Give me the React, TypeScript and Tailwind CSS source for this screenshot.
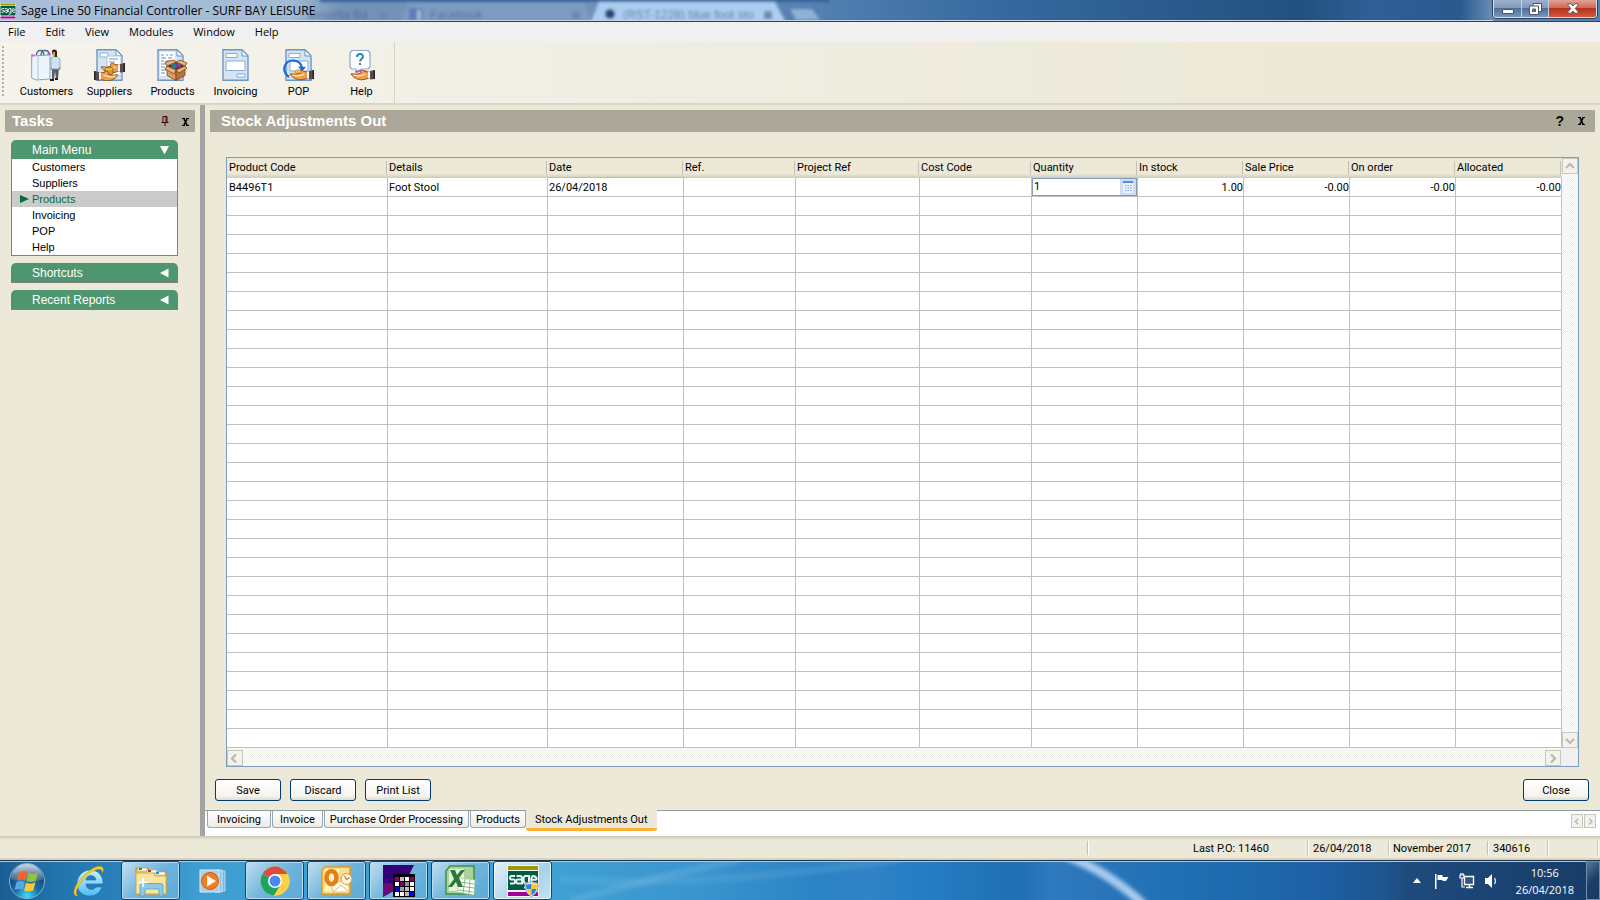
import React from "react";

const UI = "font-['Liberation_Sans',Arial,sans-serif]";
const SMALL = "font-[Roboto,'Liberation_Sans',sans-serif]";

/* ---------- document shape shared by the toolbar icons ---------- */
function Sheet() {
  return (
    <>
      <path d="M3 .7h19l6 6V31.300H3z" fill="#d3e4f3" stroke="#6d97c3" strokeWidth="1.400" />
      <path d="M22 1v6h6z" fill="#f4f9fd" stroke="#6d97c3" />
    </>
  );
}

/* Open palm; fingers point left unless flipped. */
function Hand({ x, y, flip = false }: { x: number; y: number; flip?: boolean }) {
  return (
    <g transform={`translate(${x} ${y})${flip ? " scale(-1 1)" : ""}`}>
      <path d="M0 4c2-1 5 1 7 0l3-1c-2-3 2-3.500 4-1.500l5 .5v6l-6 1.500c-5 1-10-1-13-5.500z" fill="#eda04c" stroke="#8f4a1b" strokeWidth=".9" />
      <path d="M2.500 5c4 1.500 8 1 12-1" fill="none" stroke="#ffe6b8" strokeWidth="1.300" />
      <path d="M17 1.500h2.500v7h-2.500z" fill="#f6f6f6" />
      <path d="M19 1l5-1v9l-5 .5z" fill="#5a4a4c" />
      <path d="M22.500 0h1.500v9h-1.500z" fill="#2c2226" />
    </g>
  );
}

function CustomersIcon() {
  return (
    <svg width="32" height="32" viewBox="0 0 32 32" aria-hidden="true">
      <path d="M5.500 6c0-6 7-6 7.500 0M10 6c0-6 8-6 8.500 0" fill="none" stroke="#3f6a92" strokeWidth="1.400" />
      <path d="M.7 7L19 6v24l-14 1-4.300-2z" fill="#eef4fb" stroke="#7fa4cb" />
      <path d="M7 7v23.500" stroke="#a9c5e2" />
      <path d="M0 6h4M1 6v2M16 5h4" stroke="#e040d0" />
      <path d="M21 18h7l-1 12h-2l-1-8-1 9h-2z" fill="#555b62" />
      <path d="M20 9l3-1.500h3L29 10v10h-9z" fill="#cfe2f4" stroke="#7ba0c7" strokeWidth=".8" />
      <path d="M21 2c1-2 5-2 5 1v5h-2l-1-2-2-1z" fill="#3a2414" />
      <path d="M21.500 3h2.500v4h-2z" fill="#d99a5c" />
      <path d="M19 30h4v2h-4zM24 29h3v2h-3z" fill="#2b1b12" />
      <path d="M28.500 18v3M20.500 19v2" stroke="#c98548" strokeWidth="1.500" />
    </svg>
  );
}

function SuppliersIcon() {
  return (
    <svg width="32" height="32" viewBox="0 0 32 32" aria-hidden="true">
      <Sheet />
      <path d="M6 4h8v4H6z" fill="#fff" stroke="#8bb0d6" />
      <path d="M13 7h14v20H13z" fill="#fff" stroke="#a9c5e2" />
      <path d="M15 10h9M15 13h6" stroke="#6f98c6" />
      <Hand x={7} y={14} />
      <path d="M11 19l5-1.500 3 1.500v6l-5 1.500-3-1.500z" fill="#d69a2b" stroke="#8a5a12" strokeWidth=".8" />
      <path d="M11.500 19.500l3 1.500 4-1.500" fill="none" stroke="#f7d888" />
      <Hand x={24} y={22} flip />
    </svg>
  );
}

function ProductsIcon() {
  return (
    <svg width="32" height="32" viewBox="0 0 32 32" aria-hidden="true">
      <path d="M1 .7h19l6 6V31.300H1z" fill="#d3e4f3" stroke="#6d97c3" strokeWidth="1.400" />
      <path d="M20 1v6h6z" fill="#f4f9fd" stroke="#6d97c3" />
      <path d="M3 3h15v24H3z" fill="#fff" />
      <path d="M4 6h3M9 6h2M13 6h3M4 9h5M11 9h4M4 12h3M9 12h5M4 15h5M4 18h4M4 21h5M4 24h4" stroke="#5a8fc6" strokeWidth="1.200" />
      <path d="M10 17l9 4v10.500l-9-5z" fill="#dc9c62" stroke="#7c4417" strokeWidth=".8" />
      <path d="M19 21l9-4v9.500l-9 5z" fill="#b8713a" stroke="#7c4417" strokeWidth=".8" />
      <path d="M10 17l9-4 9 4-9 4z" fill="#5a2e14" />
      <circle cx="17" cy="17" r="3" fill="#1f7f86" />
      <circle cx="21.500" cy="16" r="2.800" fill="#7b3c9b" />
      <path d="M10 17l-2-4 9-2 2 2zM28 17l2-3-7-3-4 2zM10 17l-2 3 9 5 2-4zM28 17l2 2-8 5-3-3z" fill="#e9b47c" stroke="#7c4417" strokeWidth=".8" />
    </svg>
  );
}

function InvoicingIcon() {
  return (
    <svg width="32" height="32" viewBox="0 0 32 32" aria-hidden="true">
      <Sheet />
      <path d="M6 4.500h11v4H6zM6 12h19v9.500H6zM17 25h8v3h-8z" fill="#fff" stroke="#86add5" />
    </svg>
  );
}

function PopIcon() {
  return (
    <svg width="32" height="32" viewBox="0 0 32 32" aria-hidden="true">
      <Sheet />
      <path d="M6 4.500h11v4H6zM7 12h18v10H7z" fill="#fff" stroke="#86add5" />
      <path d="M6 28C-2 22 1 11.500 10 11.500c5.500 0 8 3 9 7" fill="none" stroke="#1767e6" strokeWidth="2.200" />
      <path d="M15 17.500l8 .5-4 4.500z" fill="#1767e6" />
      <Hand x={7} y={21} />
      <path d="M12 22l3-1.500 3 1.500v2h-6z" fill="#f3c64c" stroke="#b07a1a" strokeWidth=".6" />
    </svg>
  );
}

function HelpIcon() {
  return (
    <svg width="32" height="32" viewBox="0 0 32 32" aria-hidden="true">
      <path d="M6 1.500h16l2 2V18l-2 2h-7l-4 4-1-4H6l-2-2V3.500z" fill="#fdfeff" stroke="#86a9cc" strokeWidth="1.200" />
      <path d="M11 8c0-4 6-4 6-.5 0 2.500-3 2.500-3 5" fill="none" stroke="#2e86b8" strokeWidth="2" />
      <path d="M13 14h2v2h-2z" fill="#2e86b8" />
      <path d="M9 23l3-1h8" fill="none" stroke="#e040d0" strokeWidth="1.500" />
      <Hand x={5} y={21} />
    </svg>
  );
}

/* ---------- taskbar icons ---------- */
function SageLogo({ size }: { size: number }) {
  return (
    <svg width={size} height={size} viewBox="0 0 32 32" aria-hidden="true">
      <path d="M0 0h32v32H0z" fill="#f4f6f4" />
      <path d="M1 1h30v4H1z" fill="#9c9a00" />
      <path d="M1 6h30v19H1z" fill="#005a46" />
      <path d="M1 27h30v4H1z" fill="#a1009f" />
      <g fill="none" stroke="#e8f3ef" strokeWidth="2">
        <path d="M8 11H4.500c-2 0-2 3.500 0 3.500h2c2 0 2 4 0 4H3" />
        <path d="M9.500 11H13c1.500 0 2 1 2 2v5.500h-4c-2.500 0-2.500-4 0-4h4" />
        <path d="M22 18.500h-3.500c-2.500 0-2.500-7.500 0-7.500H22v9c0 2-1 2.500-5 2.500" />
        <path d="M30 18.500h-3.500c-3 0-3-7.500 0-7.500 3.500 0 3.500 3.700 2.500 3.700h-4" />
      </g>
    </svg>
  );
}

function StartOrb() {
  return (
    <svg width="38" height="38" viewBox="0 0 38 38" aria-hidden="true">
      <defs>
        <radialGradient id="orb" cx=".5" cy=".92" r=".85">
          <stop offset="0" stopColor="#39e0fb" />
          <stop offset=".4" stopColor="#1a6fa5" />
          <stop offset=".8" stopColor="#174a78" />
          <stop offset="1" stopColor="#3e6c94" />
        </radialGradient>
        <linearGradient id="orbGloss" x1="0" y1="0" x2="0" y2="1">
          <stop offset="0" stopColor="#fff" stopOpacity=".7" />
          <stop offset="1" stopColor="#fff" stopOpacity=".1" />
        </linearGradient>
      </defs>
      <circle cx="19" cy="19" r="17.500" fill="url(#orb)" stroke="#86b4d4" />
      <path d="M3 17a16 15 0 0 1 32 0c-8 4-22 4-32 0z" fill="url(#orbGloss)" />
      <path d="M11 10.500c3-2 6-1.500 8.500 0l-2 8c-3-1.500-5.500-1.500-8.500 0z" fill="#f0652a" />
      <path d="M20.500 11c3 1.500 6 1.500 9.500-.5l-2 8c-3 2-6.500 1.500-9.500.5z" fill="#8cc63f" />
      <path d="M8.500 20c3-1.500 5.500-1.500 8.500 0l-2 8c-3-1.500-5.500-1.500-8.500 0z" fill="#54a8e8" />
      <path d="M18 20.500c3 1.500 6.500 1.500 9.500-.5l-2 8c-3 2-6.500 1.500-9.500.5z" fill="#fcc732" />
    </svg>
  );
}

function ExplorerE() {
  return (
    <svg width="32" height="32" viewBox="0 0 32 32" aria-hidden="true">
      <defs>
        <linearGradient id="ie" x1="0" y1="0" x2="0" y2="1">
          <stop offset="0" stopColor="#c8f2ff" />
          <stop offset="1" stopColor="#4ebdf3" />
        </linearGradient>
      </defs>
      <path d="M30 19H13c0 6 8 7 10 3h6c-2 6-7 9-12 9C9 31 4 26 4 18.500S10 5 17.500 5C26 5 30.500 12 30 19zM13 15h10c-.5-6-9.500-6-10 0z" fill="url(#ie)" stroke="#2477b0" strokeWidth=".7" />
      <path d="M5 31c-6 1-5-8 1-15C13 7 24-1 29 2c2 1 1.500 4 .5 6 0-8-12-2-19 6-7 8-9 15-5.500 17z" fill="#f9cc22" stroke="#c58e08" strokeWidth=".4" />
    </svg>
  );
}

function FolderIcon() {
  return (
    <svg width="34" height="32" viewBox="0 0 34 32" aria-hidden="true">
      <path d="M2 3h12v4h18v22H2z" fill="#e7c867" stroke="#b89336" />
      <path d="M4 3h9v3H4zM13 5h10v3H13zM21 7h10v3H21z" fill="#fff" stroke="#c9a94f" strokeWidth=".6" />
      <path d="M5 3h3v2H5z" fill="#20a020" />
      <path d="M14 5h3v2h-3z" fill="#d02e1c" />
      <path d="M22 7h3v2h-3z" fill="#2c8be0" />
      <path d="M2 8h17l2 3h11v18H2z" fill="#f7e6a1" stroke="#cfae55" />
      <path d="M6 30V21c0-2 1-2.500 3-2.500h17c2 0 3 .5 3 2.500v10h-4v-7H11v7H6z" fill="#8fc9e8" stroke="#5a9cc8" strokeWidth=".8" />
      <path d="M9 13v9M4.500 17.500h9" stroke="#fff" strokeWidth="1.500" />
    </svg>
  );
}

function MediaIcon() {
  return (
    <svg width="28" height="26" viewBox="0 0 28 26" aria-hidden="true">
      <path d="M19 3h7v20h-7z" fill="#7db8dd" stroke="#b6dcf2" />
      <path d="M16 2h7v22h-7z" fill="#8fc4e4" stroke="#c9e7f7" />
      <path d="M1 2h19v22H1z" fill="#a6cfe8" stroke="#d6edf9" />
      <circle cx="11" cy="13" r="8.500" fill="#f57c1f" stroke="#d65b0c" />
      <path d="M8 7.500l9 5.500-9 5.500z" fill="#fff" />
    </svg>
  );
}

function ChromeIcon() {
  return (
    <svg width="30" height="30" viewBox="0 0 30 30" aria-hidden="true">
      <circle cx="15" cy="15" r="14.500" fill="#fdd24a" />
      <path d="M15 15L2.500 7.700A14.500 14.500 0 0 1 27.600 8H15z" fill="#dd4b3e" />
      <path d="M2.500 7.700A14.500 14.500 0 0 0 14 29.500l7-11-6-3.500z" fill="#1da462" />
      <path d="M15 8h12.600a14.500 14.500 0 0 1-13.600 21.500l7-11z" fill="#fdd24a" />
      <circle cx="15" cy="15" r="7" fill="#fff" />
      <circle cx="15" cy="15" r="5.500" fill="#4a8af4" />
    </svg>
  );
}

function OutlookIcon() {
  return (
    <svg width="32" height="32" viewBox="0 0 32 32" aria-hidden="true">
      <path d="M4 2h25v27H1V5z" fill="#fde08a" stroke="#e59b1a" strokeWidth="1.500" />
      <path d="M4 4h14v22H4z" fill="#fff2c4" />
      <path d="M10 19l10-3 8 5v6H12z" fill="#fffdf6" stroke="#e7b450" strokeWidth=".8" />
      <path d="M12 27l8-7 7 6" fill="none" stroke="#e7b450" />
      <ellipse cx="10.500" cy="12.500" rx="5" ry="6.500" fill="none" stroke="#e67e12" strokeWidth="4.500" />
      <circle cx="25.500" cy="14" r="5.500" fill="#fdf3dc" stroke="#e0982b" />
      <path d="M23.500 11l2 3.500 3-2" fill="none" stroke="#c9761a" strokeWidth="1.200" />
    </svg>
  );
}

function GridAppIcon() {
  const cells: [number, number, string][] = [
    [0, 0, "#8a007c"], [1, 0, "#c0c0c0"], [2, 0, "#fff"], [3, 0, "#8a007c"],
    [0, 1, "#fff"], [1, 1, "#7a0070"], [2, 1, "#909090"], [3, 1, "#fff"],
    [0, 2, "#0000f0"], [1, 2, "#a0a0a0"], [2, 2, "#c0c0c0"], [3, 2, "#fff"],
    [0, 3, "#fff"], [1, 3, "#fff"], [2, 3, "#c0c0c0"], [3, 3, "#0000f0"],
  ];
  return (
    <svg width="32" height="32" viewBox="0 0 32 32" aria-hidden="true">
      <path d="M0 0h31l-5 10H14v14L0 32z" fill="#33007a" />
      <path d="M0 18h10v8L0 32z" fill="#6c0a78" />
      <path d="M10 9h22v23H10z" fill="#000" />
      {cells.map(([c, r, f]) => (
        <rect key={`${c}-${r}`} x={12 + c * 5} y={12 + r * 5} width="4" height="4" fill={f} />
      ))}
    </svg>
  );
}

function ExcelIcon() {
  return (
    <svg width="32" height="32" viewBox="0 0 32 32" aria-hidden="true">
      <path d="M5 1h24v28H1V6z" fill="#a9d39a" stroke="#3f9142" strokeWidth="1.500" />
      <path d="M4 4h15v22H4z" fill="#e3f2dc" />
      <path d="M15 13l15 2-1 15-17-3z" fill="#fff" stroke="#9fc79a" strokeWidth=".7" />
      <path d="M15 17l14 2M14 21l15 2M13 25l15 2M20 14l-2 14M25 15l-1 14" stroke="#77b377" strokeWidth=".9" />
      <path d="M5 5h5l2 5 4-5h4l-6 8 4 9h-5l-2-5-4 5H3l6-8z" fill="#2c7a34" />
    </svg>
  );
}

function SageShieldIcon() {
  return (
    <span className="relative block size-8">
      <SageLogo size={32} />
      <svg className="absolute right-0 bottom-0" width="15" height="16" viewBox="0 0 15 16" aria-hidden="true">
        <path d="M7.500.5C10 2 12 2 14 2.500c0 6-1 10-6.500 13C2 12.500 1 8.500 1 2.500 3 2 5 2 7.500.5z" fill="#f0f2f5" stroke="#8d99a6" />
        <path d="M7.500 2.200V8H2.600C2.200 6.500 2 5 2 3.700c2-.2 3.500-.5 5.500-1.500z" fill="#2f7fd6" />
        <path d="M7.500 2.200V8h4.900c.4-1.500.6-3 .6-4.300-2-.2-3.500-.5-5.500-1.500z" fill="#f7c92c" />
        <path d="M7.500 8v6.200C4.600 12.600 3.200 10.500 2.600 8z" fill="#f7c92c" />
        <path d="M7.500 8v6.200c2.900-1.600 4.300-3.700 4.900-6.200z" fill="#2f7fd6" />
      </svg>
    </span>
  );
}

/* ---------- title bar ---------- */
function TitleBar() {
  return (
    <header className="relative flex h-[22px] items-start overflow-hidden border-b border-[#2f3f5c] bg-[linear-gradient(90deg,#a9bfd8_0px,#a3bad5_290px,#7292b8_340px,#7394ba_560px,#5582b3_800px,#36699f_1000px,#22507f_1300px,#2e5f96_1370px,#2a598e_1460px,#6489b3_1490px,#5580ae_100%)]">
      <svg className="absolute inset-0" width="830" height="21" viewBox="0 0 830 21" aria-hidden="true">
        <defs>
          <filter id="soft" x="-20%" y="-50%" width="140%" height="200%"><feGaussianBlur stdDeviation="1.800" /></filter>
        </defs>
        <g filter="url(#soft)">
          <path d="M320-3h510v5H320z" fill="#376499" />
          <path d="M400 24l8-21h176l8 21z" fill="#7c9dc1" />
          <path d="M590 24l9-22h176l12 22z" fill="#aacdf0" />
          <path d="M790 9h22l8 11h-24z" fill="#8fb1d4" />
          <path d="M409 8h14v12h-14z" fill="#5f7ab8" />
          <path d="M417 10h4v10h-4z" fill="#a6b8dc" />
          <circle cx="610" cy="14" r="5" fill="#2a4574" />
          <path d="M379 11h8v8h-8zM572 11h8v8h-8zM764 11h8v8h-8z" fill="#6c89ae" />
          <g className={`${UI} text-[12px]`} fill="#4a658c" fillOpacity=".8">
            <text x="308" y="19">assuma Ba</text>
            <text x="430" y="19">Facebook</text>
            <text x="623" y="19">(RST-1228) blue foot sto</text>
          </g>
        </g>
      </svg>
      <div className="relative flex h-[21px] flex-1 items-center border-b border-[#c4d4e6] pt-px">
        <SageLogo size={16} />
        <h1 className="ml-[5px] font-['Open_Sans','Noto_Sans',sans-serif] text-[12px] leading-4 text-black">
          Sage Line 50 Financial Controller - SURF BAY LEISURE
        </h1>
      </div>
      <div className="relative mr-[3px] flex h-[18px] overflow-hidden rounded-b-[4px] border border-t-0 border-[#d5e0ec] shadow-[0_0_0_1px_#2c3e58]">
        <button aria-label="Minimise" className="flex w-7 items-center justify-center border-r border-[#c3d0e0] bg-[linear-gradient(#9db1cc,#7d97b9_50%,#4f6f9a_50%,#7996ba)]">
          <svg width="12" height="10" viewBox="0 0 12 10" aria-hidden="true"><path d="M.5 5.500h11v4H.5z" fill="#fff" stroke="#49566b" /></svg>
        </button>
        <button aria-label="Restore" className="flex w-[27px] items-center justify-center border-r border-[#c3d0e0] bg-[linear-gradient(#9db1cc,#7d97b9_50%,#4f6f9a_50%,#7996ba)]">
          <svg width="13" height="12" viewBox="0 0 13 12" aria-hidden="true">
            <path d="M4 .5h8.500v8H4z" fill="#fff" stroke="#49566b" />
            <path d="M.5 3h9v8.500h-9z" fill="#fff" stroke="#49566b" />
            <path d="M3.500 6h3v2.500h-3z" fill="#6783a8" stroke="#49566b" />
          </svg>
        </button>
        <button aria-label="Close window" className="flex w-[47px] items-center justify-center bg-[linear-gradient(#dfa396,#cf6a55_45%,#b8321b_50%,#d0583c)]">
          <svg width="12" height="11" viewBox="0 0 12 11" aria-hidden="true">
            <path d="M1 .8h3.200L6 3 7.800.8H11v1.400L8.200 5.500 11 8.700v1.500H7.800L6 8l-1.800 2.200H1V8.700l2.800-3.200L1 2.200z" fill="#fff" stroke="#5a4750" strokeWidth=".9" />
          </svg>
        </button>
      </div>
    </header>
  );
}

const menus = ["File", "Edit", "View", "Modules", "Window", "Help"];

function MenuBar() {
  return (
    <nav aria-label="Menu" className="flex h-5 items-center gap-5 bg-[#f0f0f0] pl-2 font-['Open_Sans','Noto_Sans',sans-serif] text-[11px] leading-5 text-black">
      {menus.map((m) => (
        <button key={m}>{m}</button>
      ))}
    </nav>
  );
}

const tools = [
  { label: "Customers", icon: <CustomersIcon /> },
  { label: "Suppliers", icon: <SuppliersIcon /> },
  { label: "Products", icon: <ProductsIcon /> },
  { label: "Invoicing", icon: <InvoicingIcon /> },
  { label: "POP", icon: <PopIcon /> },
  { label: "Help", icon: <HelpIcon /> },
];

function ToolBar() {
  return (
    <div role="toolbar" className="flex h-[63px] border-b-2 border-[#d8d5c4] bg-[linear-gradient(90deg,#f5f3ec,#f0eee3_40%,#ece9d8_80%)]">
      <div className="mt-1 ml-[2px] h-[50px] w-[2px] bg-[repeating-linear-gradient(#b5b2a4_0_2px,transparent_2px_4px)]" />
      <div className="flex border-r border-[#d8d5c4] pr-px pl-[11px]">
        {tools.map((t) => (
          <button key={t.label} className={`flex w-[63px] flex-col items-center pt-[7px] text-[11px] leading-[22px] text-black ${SMALL}`}>
            {t.icon}
            {t.label}
          </button>
        ))}
      </div>
    </div>
  );
}

/* ---------- task pane ---------- */
const taskItems = ["Customers", "Suppliers", "Products", "Invoicing", "POP", "Help"];

function CrossIcon() {
  return (
    <svg width="7" height="8" viewBox="0 0 7 8" aria-hidden="true">
      <path d="M1.500 0l4 8M5.500 0l-4 8" stroke="#000" strokeWidth="1.600" />
      <path d="M0 .5h3M4 .5h3M0 7.500h3M4 7.500h3" stroke="#000" />
    </svg>
  );
}

function GroupHeader({ title, open = false }: { title: string; open?: boolean }) {
  return (
    <button
      aria-expanded={open}
      className={`flex w-full items-center justify-between rounded-t-[5px] bg-[#4d9670] pr-[9px] pl-[21px] text-[12px] text-white ${open ? "h-[19px]" : "h-5 border-b border-[#808080]"}`}
    >
      {title}
      <svg width="9" height="10" viewBox="0 0 9 10" aria-hidden="true">
        <path d={open ? "M0 1h9L4.500 9.500z" : "M8.500 .5v9L0 5z"} fill="#fff" />
      </svg>
    </button>
  );
}

function TaskPane() {
  return (
    <aside className="w-[200px] shrink-0 pt-[5px] pr-[5px] pl-[5px]">
      <div className="flex h-[22px] items-center bg-[#aca899] pr-[6px] pl-[7px]">
        <h2 className="flex-1 text-[15px] font-bold text-white">Tasks</h2>
        <button aria-label="Pin" className="mr-[13px]">
          <svg width="8" height="10" viewBox="0 0 8 10" aria-hidden="true">
            <path d="M2 6V.5h4V6M5 1v5M.5 6.500h7M4 7v3" fill="none" stroke="#4a0000" />
          </svg>
        </button>
        <button aria-label="Close tasks" className="pt-[2px]"><CrossIcon /></button>
      </div>
      <div className="mt-2 mr-[17px] ml-[6px] flex flex-col gap-[7px]">
        <section>
          <GroupHeader title="Main Menu" open />
          <ul className="border border-t-0 border-[#808080] bg-white text-[11px] leading-4">
            {taskItems.map((t) => (
              <li key={t}>
                <a href="#" className={`flex items-center ${t === "Products" ? "bg-[#cbcbcb] text-[#0a6b3c]" : "text-black"}`}>
                  <span className="flex w-5 pl-2">
                    {t === "Products" && (
                      <svg width="9" height="8" viewBox="0 0 9 8" aria-hidden="true"><path d="M0 0l9 4-9 4z" fill="#0a6b3c" /></svg>
                    )}
                  </span>
                  {t}
                </a>
              </li>
            ))}
          </ul>
        </section>
        <GroupHeader title="Shortcuts" />
        <GroupHeader title="Recent Reports" />
      </div>
    </aside>
  );
}

/* ---------- grid ---------- */
const columns = [
  { name: "Product Code", col: "w-[161px]", value: "B4496T1" },
  { name: "Details", col: "w-[160px]", value: "Foot Stool" },
  { name: "Date", col: "w-[136px]", value: "26/04/2018" },
  { name: "Ref.", col: "w-[112px]", value: "" },
  { name: "Project Ref", col: "w-[124px]", value: "" },
  { name: "Cost Code", col: "w-[112px]", value: "" },
  { name: "Quantity", col: "w-[106px]", value: "1" },
  { name: "In stock", col: "w-[106px]", value: "1.00" },
  { name: "Sale Price", col: "w-[106px]", value: "-0.00" },
  { name: "On order", col: "w-[106px]", value: "-0.00" },
  { name: "Allocated", col: "w-auto", value: "-0.00" },
];

const emptyRows = Array.from({ length: 29 }, (_, i) => i);

const arrows = {
  up: "M1 6l4-4 4 4",
  down: "M1 3l4 4 4-4",
  left: "M6 .5l-4 4 4 4",
  right: "M3 .5l4 4-4 4",
};

function ScrollButton({ dir, small = false }: { dir: keyof typeof arrows; small?: boolean }) {
  return (
    <button
      aria-label={`Scroll ${dir}`}
      className={`flex items-center justify-center border border-[#c9c7ba] bg-[#f3f2ec] ${small ? "h-[14px] w-3" : "size-4"}`}
    >
      <svg width={small ? 7 : 10} height={small ? 7 : 9} viewBox="0 0 10 9" aria-hidden="true">
        <path d={arrows[dir]} fill="none" stroke="#bdbaab" strokeWidth="2.200" />
      </svg>
    </button>
  );
}

function QuantityEditor() {
  return (
    <div className="flex h-[18px] border border-[#7f9db9] bg-white">
      <input aria-label="Quantity" defaultValue="1" className="w-0 flex-1 pl-px text-[11px] leading-4 text-black outline-none" />
      <button aria-label="Open calculator" className="flex w-4 items-center justify-center bg-[#cfdcf8]">
        <svg width="10" height="12" viewBox="0 0 10 12" aria-hidden="true">
          <path d="M0 0h10v12H0z" fill="#eaf2ff" />
          <path d="M0 0h10v2H0z" fill="#4a90e8" />
          <path d="M2 4.500h1.500M4.500 4.500H6M7 4.500h1.500M2 7h1.500M4.500 7H6M2 9.500h1.500M4.500 9.500H6M7 9.500h1.500" stroke="#6ba4ec" strokeWidth="1.200" />
          <path d="M7 7h1.500" stroke="#e8a030" strokeWidth="1.300" />
        </svg>
      </button>
    </div>
  );
}

const track = "bg-[repeating-conic-gradient(#f0efe9_0_25%,#ffffff_0_50%)] bg-[length:2px_2px]";

function StockGrid() {
  return (
    <div className="mx-[21px] mt-[25px] border border-[#7f9db9] bg-white">
      <div className="flex">
        <table className={`w-0 flex-1 table-fixed border-separate border-spacing-0 text-[11px] leading-4 text-black ${SMALL}`}>
          <thead>
            <tr className="bg-[linear-gradient(#ece9d8_0_16px,#e2dfcd_17px,#cfccba_20px)]">
              {columns.map((c, i) => (
                <th key={c.name} scope="col" className={`h-5 p-0 pt-[3px] pr-px text-left align-top font-normal ${c.col}`}>
                  <div className={`h-[14px] border-r border-[#c5c2b2] leading-[14px] ${i === 0 ? "pl-[2px]" : "pl-px"}`}>{c.name}</div>
                </th>
              ))}
            </tr>
          </thead>
          <tbody>
            <tr>
              {columns.map((c, i) => (
                <td
                  key={c.name}
                  className={`h-[19px] border-r border-b border-[#c0c0c0] p-0 ${i === 2 ? "shadow-[0_-1px_0_#f5b83c]" : ""} ${i === 6 ? "" : "pt-[2px]"} ${i > 6 ? "text-right" : i === 6 ? "" : i === 0 ? "pl-[2px]" : "pl-px"}`}
                >
                  {i === 6 ? <QuantityEditor /> : c.value}
                </td>
              ))}
            </tr>
            {emptyRows.map((r) => (
              <tr key={r}>
                {columns.map((c) => (
                  <td key={c.name} className="h-[19px] border-r border-b border-[#c0c0c0] p-0" />
                ))}
              </tr>
            ))}
          </tbody>
        </table>
        <div className={`flex w-4 flex-col justify-between ${track}`}>
          <ScrollButton dir="up" />
          <ScrollButton dir="down" />
        </div>
      </div>
      <div className="flex h-[18px]">
        <div className={`flex flex-1 items-end justify-between ${track}`}>
          <ScrollButton dir="left" />
          <ScrollButton dir="right" />
        </div>
        <div className="w-[17px] bg-[#f0f0f0]" />
      </div>
    </div>
  );
}

function PushButton({ label }: { label: string }) {
  return (
    <button className={`h-[22px] w-[66px] rounded-[3px] border border-[#003c74] bg-[linear-gradient(#ffffff,#f4f3ee_80%,#dedbd0)] pt-px text-[11px] leading-5 text-black ${SMALL}`}>
      {label}
    </button>
  );
}

const tabs = [
  { name: "Invoicing", pad: "px-[9px]" },
  { name: "Invoice", pad: "px-[7px]" },
  { name: "Purchase Order Processing", pad: "px-[5px]" },
  { name: "Products", pad: "px-[5px]" },
];

function TabStrip() {
  return (
    <div role="tablist" className={`mt-[9px] flex h-[26px] items-start bg-white text-[11px] text-black ${SMALL}`}>
      <div className="flex gap-px border-t border-[#919b9c] pl-[2px]">
        {tabs.map((t) => (
          <button key={t.name} role="tab" aria-selected={false} className={`h-[17px] rounded-b-[3px] border border-t-0 border-[#91a7b4] bg-[linear-gradient(#ffffff,#ecebe5)] leading-[17px] ${t.pad}`}>
            {t.name}
          </button>
        ))}
      </div>
      <button role="tab" aria-selected className="h-[21px] rounded-b-[3px] border-b-[3px] border-[#fbb034] bg-[#ece9d8] px-[9px] pt-[2px] leading-4">
        Stock Adjustments Out
      </button>
      <div className="flex flex-1 justify-end gap-px border-t border-[#919b9c] pt-[3px] pr-1">
        <ScrollButton dir="left" small />
        <ScrollButton dir="right" small />
      </div>
    </div>
  );
}

function MainPane() {
  return (
    <main className="flex min-w-0 flex-1 flex-col pt-[5px]">
      <div className="mx-[5px] flex h-[22px] items-center bg-[#aca899] pr-[10px] pl-[11px]">
        <h2 className="flex-1 text-[15px] font-bold text-white">Stock Adjustments Out</h2>
        <button aria-label="Help on this window" className="mr-[14px] text-[14px] font-bold text-black">?</button>
        <button aria-label="Close pane"><CrossIcon /></button>
      </div>
      <StockGrid />
      <div className="mt-3 flex gap-[9px] pr-[11px] pl-[10px]">
        <PushButton label="Save" />
        <PushButton label="Discard" />
        <PushButton label="Print List" />
        <div className="ml-auto flex">
          <PushButton label="Close" />
        </div>
      </div>
      <TabStrip />
    </main>
  );
}

function StatusBar() {
  const cell = "h-[14px] border-l border-[#c5c2b2] shadow-[inset_1px_0_0_#ffffff] leading-[16px]";
  return (
    <footer className={`flex h-6 items-center justify-end border-b-2 border-[#d8d2c4] bg-[linear-gradient(#c9c6b6,#ece9d8_4px)] pt-[2px] text-[11px] text-black ${SMALL}`}>
      <div className={`${cell} w-[220px] pl-[105px]`}>Last P.O: 11460</div>
      <div className={`${cell} w-[81px] pl-[5px]`}>26/04/2018</div>
      <div className={`${cell} w-[99px] pl-1`}>November 2017</div>
      <div className={`${cell} w-[60px] pl-[5px]`}>340616</div>
      <div className={`${cell} w-[50px]`} />
      <div className={`${cell} w-[3px]`} />
    </footer>
  );
}

/* ---------- taskbar ---------- */
const apps = [
  { name: "Internet Explorer", icon: <ExplorerE />, running: false },
  { name: "Windows Explorer", icon: <FolderIcon />, running: true },
  { name: "Media Player", icon: <MediaIcon />, running: false },
  { name: "Chrome", icon: <ChromeIcon />, running: true },
  { name: "Outlook", icon: <OutlookIcon />, running: true },
  { name: "Grid application", icon: <GridAppIcon />, running: true },
  { name: "Excel", icon: <ExcelIcon />, running: true },
  { name: "Sage", icon: <SageShieldIcon />, running: true },
];

function TaskBar() {
  return (
    <div className="relative flex h-10 overflow-hidden border-t border-[#1d3145] bg-[linear-gradient(90deg,#1a5d92_0px,#2275ae_60px,#2b84be_130px,#3f9fd2_200px,#3fa0d3_560px,#3a94cf_700px,#2b83c4_820px,#3083c6_870px,#277fc5_910px,#2378bd_960px,#1f6fb2_1020px,#2f79be_1050px,#2a74ba_1100px,#2070b3_1180px,#1d60a6_1320px,#1f5590_1380px,#1e4a7c_1410px,#173c68_100%)] shadow-[inset_0_1px_0_#a8cde6]">
      <svg className="absolute inset-0" width="1200" height="40" viewBox="0 0 1200 40" aria-hidden="true">
        <defs>
          <filter id="streak" x="-20%" y="-50%" width="140%" height="200%"><feGaussianBlur stdDeviation="2.200" /></filter>
        </defs>
        <path d="M570 40Q640 20 740-2" fill="none" stroke="#8cc6ea" strokeOpacity=".25" strokeWidth="7" filter="url(#streak)" />
        <path d="M560 18Q700 28 900-2" fill="none" stroke="#8cc6ea" strokeOpacity=".18" strokeWidth="7" filter="url(#streak)" />
        <path d="M1064-6Q1108 10 1144 44" fill="none" stroke="#b4d5f5" strokeOpacity=".9" strokeWidth="9" filter="url(#streak)" />
      </svg>
      <button aria-label="Start" className="relative ml-2 flex w-[51px] items-center">
        <StartOrb />
      </button>
      <div className="relative flex gap-[3px]">
        {apps.map((a) => (
          <button
            key={a.name}
            aria-label={a.name}
            className={`flex w-[59px] items-center justify-center ${
              a.running
                ? a.name === "Sage"
                  ? "rounded-[3px] border border-[#20435f] bg-[linear-gradient(135deg,#e4f1f9,#a9d1ea_60%,#c5e2f3)] shadow-[inset_0_0_0_1px_#e6f4fc]"
                  : "rounded-[3px] border border-[#20435f] bg-[linear-gradient(135deg,#c3dff0,#6fb5dc_50%,#5aaad8)] shadow-[inset_0_0_0_1px_#b4dbf0]"
                : ""
            }`}
          >
            {a.icon}
          </button>
        ))}
      </div>
      <div className="relative ml-auto flex items-center text-white">
        <button aria-label="Show hidden icons" className="mr-[13px]">
          <svg width="8" height="5" viewBox="0 0 8 5" aria-hidden="true"><path d="M4 0l4 5H0z" fill="#fff" /></svg>
        </button>
        <svg className="mr-[9px]" width="16" height="16" viewBox="0 0 16 16" aria-hidden="true">
          <path d="M1 1h1.500v15H1z" fill="#fff" />
          <path d="M3.500 2h5v2h6l-2.500 4H8.500V7h-5z" fill="#fff" />
        </svg>
        <svg className="mr-[10px]" width="16" height="16" viewBox="0 0 16 16" aria-hidden="true">
          <path d="M5.500 3.500h9v8h-9z" fill="#2d5580" stroke="#fff" strokeWidth="1.400" />
          <path d="M7 14.500h7M10.500 12v2" fill="none" stroke="#fff" strokeWidth="1.400" />
          <path d="M1 2h4v3H1zM2 0v2M4 0v2M3 5v9h3" fill="none" stroke="#fff" strokeWidth="1.200" />
        </svg>
        <svg className="mr-[17px]" width="14" height="16" viewBox="0 0 14 16" aria-hidden="true">
          <path d="M0 5h3l4-4v14l-4-4H0z" fill="#fff" />
          <path d="M9.500 5q2 3 0 6" fill="none" stroke="#dce9f5" strokeWidth="1.300" />
        </svg>
        <div className="mr-[12px] text-center font-['Open_Sans','Noto_Sans',sans-serif] text-[11px] leading-[17px]">
          <div>10:56</div>
          <div>26/04/2018</div>
        </div>
        <button aria-label="Show desktop" className="h-full w-[14px] border border-[#6f8fae] bg-[linear-gradient(135deg,#5a7694,#1d3f66_50%,#173a62)]" />
      </div>
    </div>
  );
}

export default function App() {
  return (
    <div className={`flex min-h-screen flex-col bg-[#ece9d8] ${UI}`}>
      <TitleBar />
      <MenuBar />
      <ToolBar />
      <div className="flex flex-1">
        <TaskPane />
        <div className="w-[5px] shrink-0 bg-[#a3a3a3]" />
        <MainPane />
      </div>
      <StatusBar />
      <TaskBar />
    </div>
  );
}
